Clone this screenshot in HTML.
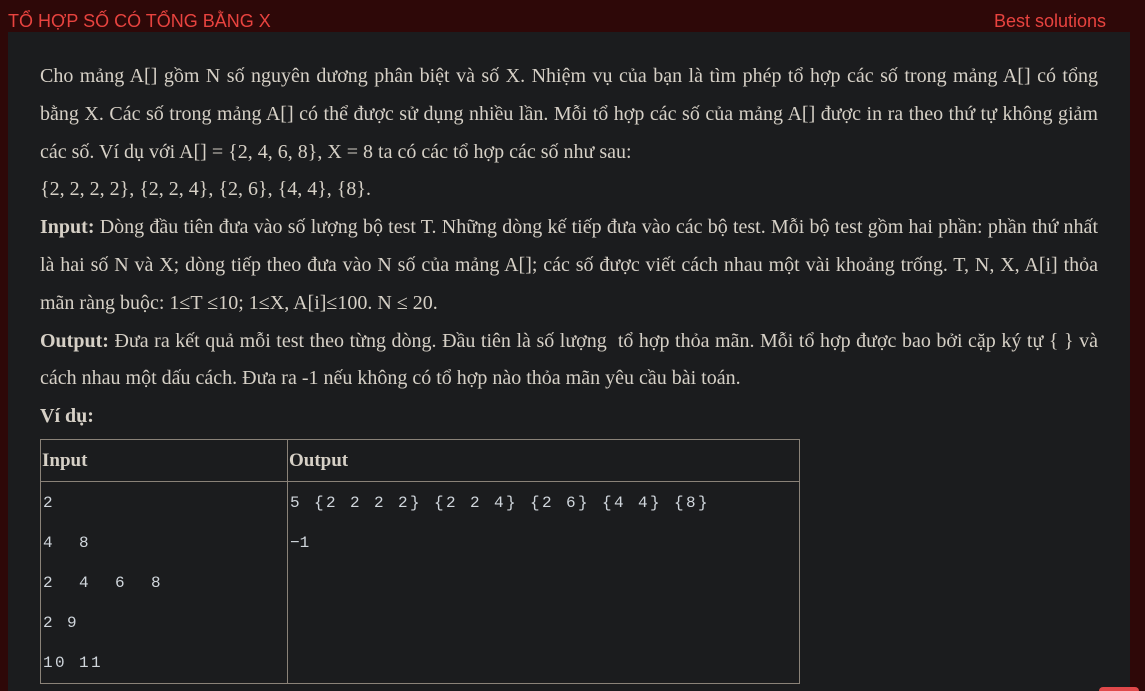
<!DOCTYPE html>
<html><head><meta charset="utf-8"><style>
html,body{margin:0;width:1145px;height:691px;overflow:hidden}
body{background:#2e0808;position:relative;font-family:"Liberation Serif",serif}
.t{position:absolute;top:11px;left:8px;color:#e8433f;font:18px "Liberation Sans",sans-serif}
.b{position:absolute;top:11px;right:39px;color:#e8433f;font:18px "Liberation Sans",sans-serif}
.p{position:absolute;left:8px;top:32px;width:1122px;height:659px;background:#1b1c1e}
.c{position:absolute;left:40px;top:58px;width:1058px;color:#d6d0c6;font-size:20px;line-height:37.8px;white-space:nowrap}
.c div{height:37.8px}
.j{text-align:justify;text-align-last:justify}
table{position:absolute;left:40px;top:439px;border-collapse:collapse;width:760px;color:#d6d0c6}
td,th{border:1px solid #8a8278;text-align:left;vertical-align:top;padding:0 2px}
th{height:41px;font-size:19px;vertical-align:middle;padding:0 1px}
td{height:199px;font:16px/40px "Liberation Mono",monospace;letter-spacing:2.4px;white-space:pre;color:#d0d6dc;padding-top:1px}
.dot{position:absolute;left:1099px;top:687px;width:40px;height:4px;border-radius:20px 20px 0 0;background:#e0484a}
</style></head><body>
<div class="t">TỔ HỢP SỐ CÓ TỔNG BẰNG X</div>
<div class="b">Best solutions</div>
<div class="p"></div>
<div class="c">
<div class="j">Cho mảng A[] gồm N số nguyên dương phân biệt và số X. Nhiệm vụ của bạn là tìm phép tổ hợp các số trong mảng A[] có tổng</div>
<div class="j">bằng X. Các số trong mảng A[] có thể được sử dụng nhiều lần. Mỗi tổ hợp các số của mảng A[] được in ra theo thứ tự không giảm</div>
<div>các số. Ví dụ với A[] = {2, 4, 6, 8}, X = 8 ta có các tổ hợp các số như sau:</div>
<div>{2, 2, 2, 2}, {2, 2, 4}, {2, 6}, {4, 4}, {8}.</div>
<div class="j"><b>Input:</b> Dòng đầu tiên đưa vào số lượng bộ test T. Những dòng kế tiếp đưa vào các bộ test. Mỗi bộ test gồm hai phần: phần thứ nhất</div>
<div class="j">là hai số N và X; dòng tiếp theo đưa vào N số của mảng A[]; các số được viết cách nhau một vài khoảng trống. T, N, X, A[i] thỏa</div>
<div>mãn ràng buộc: 1≤T ≤10; 1≤X, A[i]≤100. N ≤ 20.</div>
<div class="j"><b>Output:</b> Đưa ra kết quả mỗi test theo từng dòng. Đầu tiên là số lượng&nbsp; tổ hợp thỏa mãn. Mỗi tổ hợp được bao bởi cặp ký tự { } và</div>
<div>cách nhau một dấu cách. Đưa ra -1 nếu không có tổ hợp nào thỏa mãn yêu cầu bài toán.</div>
<div><b>Ví dụ:</b></div>
</div>
<table><tr><th style="width:244px">Input</th><th>Output</th></tr>
<tr><td>2
4  8
2  4  6  8
2 9
10 11</td><td>5 {2 2 2 2} {2 2 4} {2 6} {4 4} {8}
<span style="letter-spacing:0">−1</span></td></tr></table>
<div class="dot"></div>
</body></html>
